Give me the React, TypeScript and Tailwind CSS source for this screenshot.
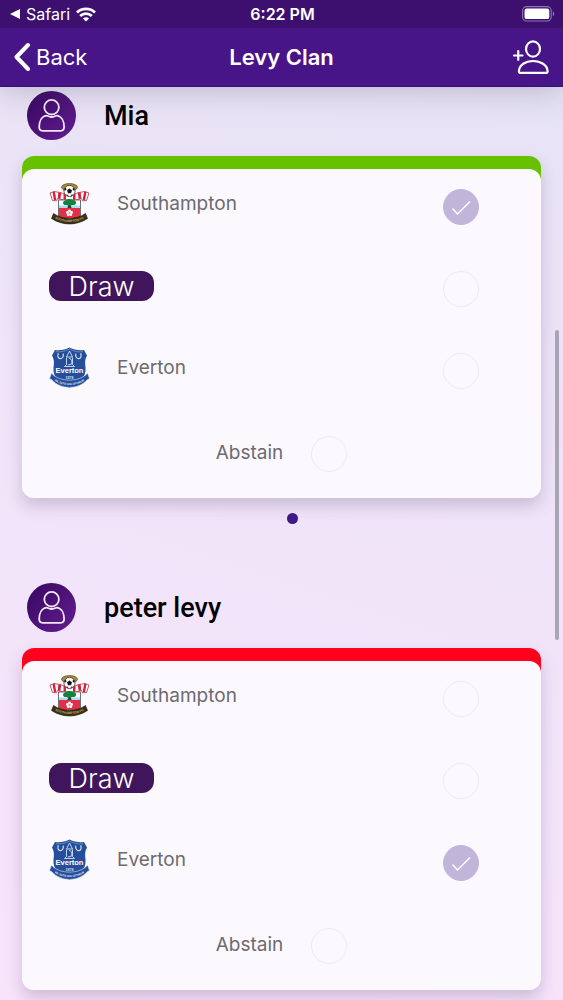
import { useId, useState } from 'react'

type Pick = 'home' | 'draw' | 'away' | 'abstain'

const MEMBERS: { id: string; name: string; pick: Pick; correct: boolean }[] = [
  { id: 'mia', name: 'Mia', pick: 'home', correct: true },
  { id: 'peter', name: 'peter levy', pick: 'away', correct: false },
]

function WifiIcon() {
  return (
    <svg viewBox="0 0 20 15" className="h-[15px] w-5" fill="none" stroke="currentColor" strokeWidth="2.8" aria-hidden="true">
      <path d="M1 5.400C6 .6 14 .6 19 5.400" />
      <path d="M4.200 8.900c3.200-3.100 8.400-3.100 11.600 0" />
      <path d="M10 14.600 6.900 11.500c1.800-1.600 4.400-1.600 6.200 0z" fill="currentColor" stroke="none" />
    </svg>
  )
}

function BatteryIcon() {
  return (
    <svg viewBox="0 0 33 16" className="h-4 w-[33px]" aria-hidden="true">
      <rect x=".6" y=".6" width="28.6" height="14.4" rx="4" fill="none" stroke="#8f76b8" strokeWidth="1.1" />
      <rect x="2.5" y="2.5" width="24.8" height="10.6" rx="2.2" fill="#fff" />
      <path d="M30.8 5.600c1.900.6 1.900 3.900 0 4.500z" fill="#8f76b8" />
    </svg>
  )
}

function AddPersonIcon() {
  return (
    <svg viewBox="0 0 38 36" className="h-9 w-[38px]" fill="none" stroke="currentColor" strokeWidth="2.2" strokeLinecap="round" aria-hidden="true">
      <path d="M3 16.500h8.500M7.250 12.200v8.600" />
      <ellipse cx="22" cy="10" rx="7" ry="7.600" />
      <path d="M7.900 32C8.400 26 14.200 22 22 22s14.100 4 14.600 10c.1 1.200-.6 1.900-1.700 1.900H9.600c-1.100 0-1.800-.7-1.700-1.900z" />
    </svg>
  )
}

function Avatar() {
  return (
    <span className="flex size-[49px] items-center justify-center rounded-full bg-linear-to-br from-[#36065f] to-[#651e92]">
      <svg viewBox="0 0 49 49" className="size-full" fill="none" stroke="#f3e8fb" strokeWidth="1.8" aria-hidden="true">
        <circle cx="24.600" cy="16.200" r="7.300" />
        <path d="M19.200 24.700c-4.700.8-7 6-7 11.400 0 2.400 1.200 3.700 3.400 3.700h18.100c2.200 0 3.400-1.300 3.400-3.700 0-5.400-2.300-10.600-7-11.400-1.600-.2-3 1.300-5.500 1.300s-3.800-1.500-5.400-1.300z" />
      </svg>
    </span>
  )
}

function SouthamptonCrest() {
  const ribbon = useId()
  return (
    <svg viewBox="0 0 41 41" className="size-[41px] overflow-visible" aria-hidden="true">
      <path d="M1 10l4-1.500 7 1.200 8.500 3.300 8.500-3.300 7-1.200 4 1.500-2.500 7.500-4 .3-1-2.300-6.500 1.700h-11l-6.500-1.700-1 2.300-4-.3z" fill="#fff" stroke="#9b1a30" strokeWidth=".7" />
      <path d="M3.500 9.300l2.300-.8 1.500 8.300-2.300.7zM9.300 9.300l3 .6-1 6-2.500-.4zM14.500 10.800l2.500 1v5h-2.500zM37.500 9.300l-2.300-.8-1.500 8.300 2.300.7zM31.700 9.300l-3 .6 1 6 2.500-.4zM26.500 10.800l-2.500 1v5h2.500z" fill="#d9203b" />
      <path d="M9.500 17h22v18h-22z" fill="#fff" stroke="#46514e" strokeWidth=".8" />
      <path d="M10 22.500h21v2.500H10z" fill="#a8dcf0" />
      <path d="M10 25h21v10H10z" fill="#e2304a" />
      <path d="M19.500 21h2l1 4h-4z" fill="#214b2c" />
      <path d="M14 20c0-2 2-2.500 3-3 1.500-1.500 5-1.500 7 0 2 .2 3.500 1.500 3 3.200-.5 2-2.700 2-4 1.800-1.700 1-4 1-5.500 0-2 .3-3.500-.5-3.500-2z" fill="#16803f" />
      <g fill="#fff">
        <circle cx="20.500" cy="28" r="1.400" />
        <circle cx="18.400" cy="29.500" r="1.400" />
        <circle cx="22.600" cy="29.500" r="1.400" />
        <circle cx="19.200" cy="31.700" r="1.400" />
        <circle cx="21.800" cy="31.700" r="1.400" />
      </g>
      <circle cx="20.500" cy="30.100" r=".9" fill="#e3aa46" />
      <ellipse cx="20.500" cy="4.200" rx="8" ry="3.700" fill="#a78a37" stroke="#4b401f" strokeWidth=".6" />
      <circle cx="20.500" cy="8" r="5.600" fill="#fff" stroke="#222" strokeWidth=".7" />
      <path d="M20.500 5.500l2.500 1.800-1 3h-3l-1-3zM15.300 6l1.500-1.300.8 1.600-1.800 1.600zM25.700 6l-1.500-1.300-.8 1.600 1.800 1.600zM17 11.500l2 .3.300 1.700zM24 11.500l-2 .3-.3 1.700z" fill="#171717" />
      <path d="M4.500 30.500c9.500 6.500 22.500 6.500 32 0l2 5c-11 7.300-25 7.300-36 0z" fill="#3a3118" stroke="#141109" strokeWidth=".6" />
      <path id={ribbon} d="M5 34.800c9.500 5.700 21.500 5.700 31 0" fill="none" />
      <text fontSize="3.200" fontWeight="700" fill="#c7ae58" fontFamily="Liberation Sans, sans-serif">
        <textPath href={`#${ribbon}`} startOffset="50%" textAnchor="middle">SOUTHAMPTON FC</textPath>
      </text>
    </svg>
  )
}

function EvertonCrest() {
  const ribbon = useId()
  return (
    <svg viewBox="0 0 41 42" className="h-[42px] w-[41px] overflow-visible" aria-hidden="true">
      <path d="M6 3c5 .8 10-.2 14.500-2.500C25 2.800 30 3.800 35 3l3 5.500c-2.500 4-2 8-1.500 12 .8 10-6 15-16 20.500C10.500 35.500 3.700 31 4.500 20.500c.5-4 1-8-1.500-12z" fill="#264f9b" />
      <path d="M7 4.700c5 .6 9-.4 13.500-2.600C25 4.300 29 5.300 34 4.700" fill="none" stroke="#8fa8d3" strokeWidth=".6" />
      <g fill="none" stroke="#d5e1f5" strokeWidth="1.200">
        <path d="M9.300 6.300c-2.400 6.800 5.800 7.400 5 .3M26.700 6.600c-.8 7.100 7.400 6.500 5-.3" />
        <path d="M20.500 4l-3 6h6zM17.500 10.500v7l-2 2h10l-2-2v-7M20 11l2.800 2v4l-4 1" strokeWidth=".9" />
      </g>
      <text x="20.500" y="26" fontSize="7.500" fontWeight="700" textAnchor="middle" fill="#fff" fontFamily="Liberation Sans, sans-serif">Everton</text>
      <text x="20.500" y="31.500" fontSize="3.500" fontWeight="700" textAnchor="middle" fill="#d5e1f5" fontFamily="Liberation Sans, sans-serif">1878</text>
      <path d="M2.500 26c7 9.500 29 9.500 36 0l2 5.500-2.200 1.200c-9 10.300-26.600 10.300-35.600 0L.5 31.500z" fill="#264f9b" stroke="#dfe7f5" strokeWidth=".6" />
      <path id={ribbon} d="M3.500 31.500c7.500 8.700 26.500 8.700 34 0" fill="none" />
      <text fontSize="2.600" fontWeight="700" fill="#e6eefb" fontFamily="Liberation Sans, sans-serif">
        <textPath href={`#${ribbon}`} startOffset="50%" textAnchor="middle">NIL SATIS NISI OPTIMUM</textPath>
      </text>
    </svg>
  )
}

function PickRadio({ id, name, checked, onPick }: { id: string; name: string; checked: boolean; onPick: () => void }) {
  return (
    <span className="relative size-9 shrink-0">
      <input
        type="radio"
        id={id}
        name={name}
        checked={checked}
        onChange={onPick}
        className="block size-9 appearance-none rounded-full border border-[#eeeaf1] checked:border-[#c2b5da] checked:bg-[#c2b5da]"
      />
      {checked && (
        <svg viewBox="0 0 36 36" className="pointer-events-none absolute inset-0 size-9" fill="none" stroke="#fff" strokeWidth="1.500" aria-hidden="true">
          <path d="M9.500 19.500l5 5.500L27 12.500" />
        </svg>
      )}
    </span>
  )
}

function MemberPick({ id, name, pick, correct }: { id: string; name: string; pick: Pick; correct: boolean }) {
  const [selected, setSelected] = useState<Pick>(pick)
  const radio = (value: Pick) => (
    <PickRadio id={`${id}-${value}`} name={id} checked={selected === value} onPick={() => setSelected(value)} />
  )

  return (
    <section className="px-[22px]">
      <div className="mb-4 flex items-center gap-7 pl-[5px]">
        <Avatar />
        <h2 className="font-[Roboto,sans-serif] text-[27px] leading-8 font-medium text-black">{name}</h2>
      </div>

      {/* Card, coloured by result */}
      <div className="rounded-xl shadow-[0_8px_16px_rgba(70,50,100,0.22)]">
        <div className={`h-[25px] rounded-t-xl ${correct ? 'bg-[#66c200]' : 'bg-[#ff001d]'}`} />
        <div className="-mt-3 rounded-xl bg-[#fcf9fe] pt-3.5 pr-[62px] pb-5 pl-[27px] text-[19px] text-[#6d6a70]">
          <div className="flex h-[82px] items-start">
            <SouthamptonCrest />
            <label htmlFor={`${id}-home`} className="ml-[27px] flex-1 leading-[41px]">Southampton</label>
            <div className="pt-1.5">{radio('home')}</div>
          </div>
          <div className="flex h-[82px] items-start">
            <label htmlFor={`${id}-draw`} className="mt-1.5 h-[30px] w-[105px] rounded-xl bg-[#40155b] text-center text-[27px] leading-8 font-light text-white">
              Draw
            </label>
            <div className="ml-auto pt-1.5">{radio('draw')}</div>
          </div>
          <div className="flex h-[82px] items-start">
            <EvertonCrest />
            <label htmlFor={`${id}-away`} className="ml-[27px] flex-1 leading-[42px]">Everton</label>
            <div className="pt-1.5">{radio('away')}</div>
          </div>
          <div className="-mr-[35px] flex h-[49px] items-center justify-center gap-7">
            <label htmlFor={`${id}-abstain`}>Abstain</label>
            {radio('abstain')}
          </div>
        </div>
      </div>

      {/* Pager */}
      <div className="mt-[15px] mb-[59px] flex justify-center pl-[22px]">
        <span className="size-[11px] rounded-full bg-[#3d1a86]" />
      </div>
    </section>
  )
}

export default function App() {
  return (
    <div className="relative flex h-screen flex-col bg-linear-[18deg] from-[#f8e3fb] via-[#f0e4f9] to-[#e5e3f5] font-[Inter,sans-serif]">
      <header className="z-10 bg-[#481588] text-white shadow-[0_4px_28px_rgba(60,50,80,0.25)]">
        <div className="grid h-7 grid-cols-3 items-center bg-[#3d1070] pr-2 pl-2.5">
          <div className="flex items-center gap-1.5 text-base">
            <svg viewBox="0 0 10 10" className="size-2.5" fill="currentColor" aria-hidden="true">
              <path d="M0 5 10 0v10z" />
            </svg>
            <a href="#safari">Safari</a>
            <WifiIcon />
          </div>
          <span className="text-center text-base font-semibold">6:22 PM</span>
          <div className="flex justify-end"><BatteryIcon /></div>
        </div>
        <nav className="grid h-[59px] grid-cols-3 items-center border-b border-[#38106b] px-3.5">
          <a href="#back" className="flex items-center gap-1 text-[22px]">
            <svg viewBox="0 0 18 30" className="h-[30px] w-[18px]" fill="none" stroke="currentColor" strokeWidth="4" strokeLinecap="round" strokeLinejoin="round" aria-hidden="true">
              <path d="M14 3 2.500 15 14 27" />
            </svg>
            Back
          </a>
          <h1 className="text-center text-[22px] font-semibold whitespace-nowrap">Levy Clan</h1>
          <button type="button" aria-label="Add member" className="justify-self-end">
            <AddPersonIcon />
          </button>
        </nav>
      </header>

      <main className="min-h-0 flex-1 overflow-y-auto pt-1 [scrollbar-width:none]">
        {MEMBERS.map(m => <MemberPick key={m.id} {...m} />)}
      </main>

      {/* Scroll indicator */}
      <div className="pointer-events-none absolute top-[33%] right-1 h-[31%] w-1 rounded-full bg-[#aaa5b5]" />
    </div>
  )
}
